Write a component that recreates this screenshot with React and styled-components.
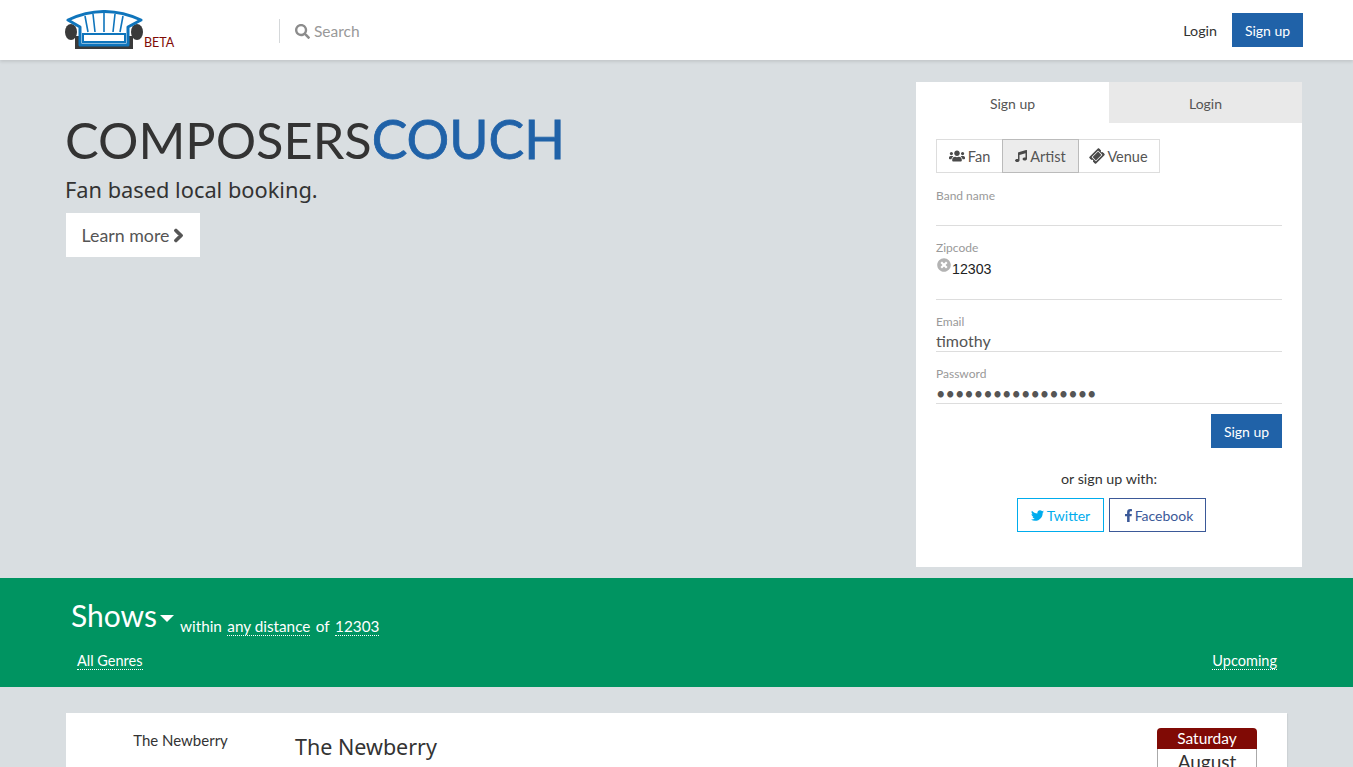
import styled, { createGlobalStyle } from "styled-components";
import { FaSearch, FaChevronRight, FaUsers, FaMusic, FaTicketAlt, FaTimesCircle, FaTwitter, FaFacebookF } from "react-icons/fa";

const GlobalStyle = createGlobalStyle`
    html, body {
        margin: 0;
        padding: 0;
        background-color: #d9dee1;
        font-family: "Lato", "Liberation Sans", sans-serif;
        color: #333;
    }
    * {
        box-sizing: border-box;
    }
`;

const Page = styled.div`
    height: 100vh;
    overflow: hidden;
`;

const Header = styled.header`
    height: 60px;
    background-color: white;
    box-shadow: 0 2px 3px rgba(0, 0, 0, 0.1);
    padding: 0 50px 0 65px;
    display: flex;
    align-items: center;
    position: relative;
`;

const LogoBox = styled.a`
    display: flex;
    align-items: flex-end;
    width: 214px;
    height: 40px;
    margin-top: -1px;
`;

const Beta = styled.span`
    font-size: 12.5px;
    line-height: 12px;
    color: #800a05;
    margin-bottom: 1px;
`;

const SearchBox = styled.div`
    flex: 1;
    height: 24px;
    margin-top: 2px;
    border-left: 1px solid #d5d8da;
    padding-left: 15px;
    display: flex;
    align-items: center;
    gap: 4px;
    font-size: 15.5px;
    color: #999;
    svg {
        font-size: 15px;
        color: #8c8c8c;
    }
`;

const LoginLink = styled.a`
    font-size: 14.3px;
    color: #333;
    margin-right: 15px;
`;

const BlueButton = styled.button`
    width: ${props => props.width}px;
    height: 34px;
    padding: 0;
    border: none;
    background-color: #2062a8;
    color: white;
    font-family: inherit;
    font-size: 14px;
`;

const Hero = styled.section`
    height: 518px;
    padding: 22px 51px 0 65px;
    display: flex;
    justify-content: space-between;
    align-items: flex-start;
`;

const Intro = styled.div`
    display: flex;
    flex-direction: column;
    align-items: flex-start;
`;

const Title = styled.h1`
    margin: 24px 0 0;
    font-size: 50.5px;
    line-height: 64px;
    font-weight: 400;
    color: #333;
    b {
        font-size: 53.4px;
        font-weight: 400;
        -webkit-text-stroke: 0.8px #2062a8;
        color: #2062a8;
    }
`;

const Tagline = styled.p`
    margin: 3px 0 0;
    font-family: "Noto Sans", sans-serif;
    font-size: 21.8px;
    line-height: 30px;
    color: #333;
`;

const LearnMore = styled.a`
    margin-top: 8px;
    margin-left: 1px;
    width: 134px;
    height: 44px;
    padding-left: 2px;
    background-color: white;
    color: #555;
    font-size: 17.8px;
    display: flex;
    align-items: center;
    justify-content: center;
    gap: 2px;
    svg {
        font-size: 15px;
        stroke: currentColor;
        stroke-width: 40;
    }
`;

const SignupPanel = styled.div`
    width: 386px;
    height: 485px;
    background-color: white;
`;

const Tabs = styled.div`
    display: flex;
    height: 41px;
`;

const Tab = styled.div`
    flex: 1;
    display: flex;
    align-items: center;
    justify-content: center;
    padding-top: 2px;
    font-size: 14px;
    color: #555;
    background-color: ${props => props.active ? "white" : "#e9e9e9"};
`;

const PanelBody = styled.div`
    padding: 16px 20px 0;
`;

const RoleGroup = styled.div`
    display: flex;
    height: 34px;
    margin-bottom: 16px;
`;

const RoleButton = styled.div`
    width: ${props => props.width}px;
    margin-left: ${props => props.first ? 0 : -1}px;
    border: 1px solid ${props => props.active ? "#bbb" : "#ddd"};
    background-color: ${props => props.active ? "#ececec" : "white"};
    position: relative;
    z-index: ${props => props.active ? 1 : 0};
    display: flex;
    align-items: center;
    justify-content: center;
    gap: 3px;
    font-size: 14.5px;
    color: #555;
    svg {
        font-size: ${props => props.iconSize}px;
        color: #4a4a4a;
    }
`;

const TicketIcon = styled(FaTicketAlt)`
    transform: rotate(-45deg);
`;

const Field = styled.div`
    height: ${props => props.height}px;
    border-bottom: 1px solid #ddd;
    margin-bottom: 15px;
`;

const FieldLabel = styled.label`
    display: block;
    font-size: 12px;
    line-height: 14px;
    color: #999;
`;

const TextValue = styled.input`
    display: block;
    width: 100%;
    height: 23px;
    padding: ${props => props.type === "password" ? "1px 0 0" : "0"};
    border: none;
    outline: none;
    background: transparent;
    font-family: inherit;
    font-size: ${props => props.type === "password" ? 16.3 : 16}px;
    color: #555;
`;

const ZipTag = styled.div`
    display: flex;
    align-items: flex-start;
    gap: 1px;
    height: 20px;
    margin-top: 5px;
    font-family: "Liberation Sans", sans-serif;
    font-size: 14.2px;
    line-height: 18px;
    color: #222;
    svg {
        font-size: 14px;
        color: #b3b3b3;
        margin: -2px 0 0 1px;
    }
`;

const SubmitRow = styled.div`
    display: flex;
    justify-content: flex-end;
    margin-top: -5px;
`;

const OrText = styled.p`
    margin: 21px 0 9px;
    text-align: center;
    font-size: 14.3px;
    line-height: 20px;
    color: #333;
`;

const SocialRow = styled.div`
    display: flex;
    justify-content: center;
    gap: 5px;
    padding-left: 5px;
`;

const SocialButton = styled.a`
    width: ${props => props.width}px;
    height: 34px;
    border: 1px solid ${props => props.color};
    color: ${props => props.color};
    font-size: 14px;
    display: flex;
    align-items: center;
    justify-content: center;
    gap: ${props => props.gap}px;
    svg {
        font-size: 13px;
    }
`;

const FilterBar = styled.section`
    height: 109px;
    background-color: #009461;
    padding: 15px 76px 0 71px;
    color: white;
`;

const FilterHead = styled.div`
    display: flex;
    align-items: flex-end;
    gap: 5.4px;
    height: 43px;
`;

const ShowsLabel = styled.span`
    font-size: 30px;
    line-height: 42px;
    font-weight: 400;
    display: flex;
    align-items: center;
    gap: 3px;
    margin-right: 0.6px;
`;

const Caret = styled.i`
    width: 0;
    height: 0;
    margin-top: 7px;
    border-left: 7px solid transparent;
    border-right: 7px solid transparent;
    border-top: 7px solid white;
`;

const Dotted = styled.span`
    border-bottom: 1px ${props => props.plain ? "solid transparent" : "dotted white"};
    font-size: ${props => props.size || 15.3}px;
    line-height: 17px;
`;

const FilterRow = styled.div`
    display: flex;
    justify-content: space-between;
    padding-left: 6px;
    margin-top: 16px;
`;

const ShowList = styled.main`
    padding: 26px 66px 0;
`;

const ShowCard = styled.article`
    height: 300px;
    background-color: white;
    display: flex;
    box-shadow: 1px 1px 1px rgba(0, 0, 0, 0.05);
`;

const VenueColumn = styled.div`
    width: 229px;
    padding-top: 18px;
    text-align: center;
    font-size: 15px;
    line-height: 18px;
    color: #333;
`;

const ShowInfo = styled.div`
    flex: 1;
    h2 {
        margin: 19px 0 0;
        font-family: "Noto Sans", sans-serif;
        font-size: 21.5px;
        line-height: 30px;
        font-weight: 400;
        color: #333;
    }
`;

const DateBadge = styled.div`
    width: 100px;
    margin: 15px 30px 0 0;
    border-radius: 4px 4px 0 0;
    overflow: hidden;
    align-self: flex-start;
`;

const DateDay = styled.div`
    height: 21px;
    background-color: #800a05;
    color: white;
    text-align: center;
    font-size: 15.5px;
    line-height: 20px;
`;

const DateMonth = styled.div`
    border: 1px solid #aaa;
    border-top: none;
    height: 80px;
    text-align: center;
    font-size: 19px;
    line-height: 26px;
    color: #333;
`;

function Logo() {
    return (
        <svg width="79" height="40" viewBox="0 0 79 40">
            <rect x="10" y="26" width="58" height="13" fill="#3a3a3a" />
            <ellipse cx="6" cy="22" rx="6" ry="8" fill="#3a3a3a" />
            <ellipse cx="72" cy="22" rx="6" ry="8" fill="#3a3a3a" />
            <path d="M15 35 L15 17 L3 10 Q39 -7 76 10 L63 17 L63 35 Z" fill="white" stroke="#0f75bc" strokeWidth="3" strokeLinejoin="round" />
            <path d="M20 6 L23 22 M28 4 L30 22 M39 3 L39 22 M50 4 L48 22 M58 6 L55 22" stroke="#0f75bc" strokeWidth="1.6" fill="none" />
            <rect x="18" y="24" width="42" height="8" fill="white" stroke="#0f75bc" strokeWidth="2" />
        </svg>
    );
}

function App() {
    return (
        <Page>
            <GlobalStyle />
            <Header>
                <LogoBox>
                    <Logo />
                    <Beta>BETA</Beta>
                </LogoBox>
                <SearchBox><FaSearch /> Search</SearchBox>
                <LoginLink>Login</LoginLink>
                <BlueButton width={71}>Sign up</BlueButton>
            </Header>

            <Hero>
                <Intro>
                    <Title>COMPOSERS<b>COUCH</b></Title>
                    <Tagline>Fan based local booking.</Tagline>
                    <LearnMore>Learn more <FaChevronRight /></LearnMore>
                </Intro>

                <SignupPanel>
                    <Tabs>
                        <Tab active>Sign up</Tab>
                        <Tab>Login</Tab>
                    </Tabs>
                    <PanelBody>
                        <RoleGroup>
                            <RoleButton first width={67} iconSize={16}><FaUsers /> Fan</RoleButton>
                            <RoleButton active width={77} iconSize={12}><FaMusic /> Artist</RoleButton>
                            <RoleButton width={82} iconSize={14}><TicketIcon /> Venue</RoleButton>
                        </RoleGroup>
                        <Field height={37}>
                            <FieldLabel>Band name</FieldLabel>
                        </Field>
                        <Field height={59}>
                            <FieldLabel>Zipcode</FieldLabel>
                            <ZipTag><FaTimesCircle /> 12303</ZipTag>
                        </Field>
                        <Field height={37}>
                            <FieldLabel>Email</FieldLabel>
                            <TextValue readOnly value="timothy" />
                        </Field>
                        <Field height={37}>
                            <FieldLabel>Password</FieldLabel>
                            <TextValue readOnly type="password" value="aaaaaaaaaaaaaaaaa" />
                        </Field>
                        <SubmitRow>
                            <BlueButton width={71}>Sign up</BlueButton>
                        </SubmitRow>
                        <OrText>or sign up with:</OrText>
                        <SocialRow>
                            <SocialButton width={87} gap={3} color="#00aced"><FaTwitter /> Twitter</SocialButton>
                            <SocialButton width={97} gap={0} color="#3b5998"><FaFacebookF /> Facebook</SocialButton>
                        </SocialRow>
                    </PanelBody>
                </SignupPanel>
            </Hero>

            <FilterBar>
                <FilterHead>
                    <ShowsLabel>Shows<Caret /></ShowsLabel>
                    <Dotted plain>within</Dotted>
                    <Dotted>any distance</Dotted>
                    <Dotted plain>of</Dotted>
                    <Dotted>12303</Dotted>
                </FilterHead>
                <FilterRow>
                    <Dotted size={14.5}>All Genres</Dotted>
                    <Dotted size={14.5}>Upcoming</Dotted>
                </FilterRow>
            </FilterBar>

            <ShowList>
                <ShowCard>
                    <VenueColumn>The Newberry</VenueColumn>
                    <ShowInfo><h2>The Newberry</h2></ShowInfo>
                    <DateBadge>
                        <DateDay>Saturday</DateDay>
                        <DateMonth>August</DateMonth>
                    </DateBadge>
                </ShowCard>
            </ShowList>
        </Page>
    );
}

export default App;
